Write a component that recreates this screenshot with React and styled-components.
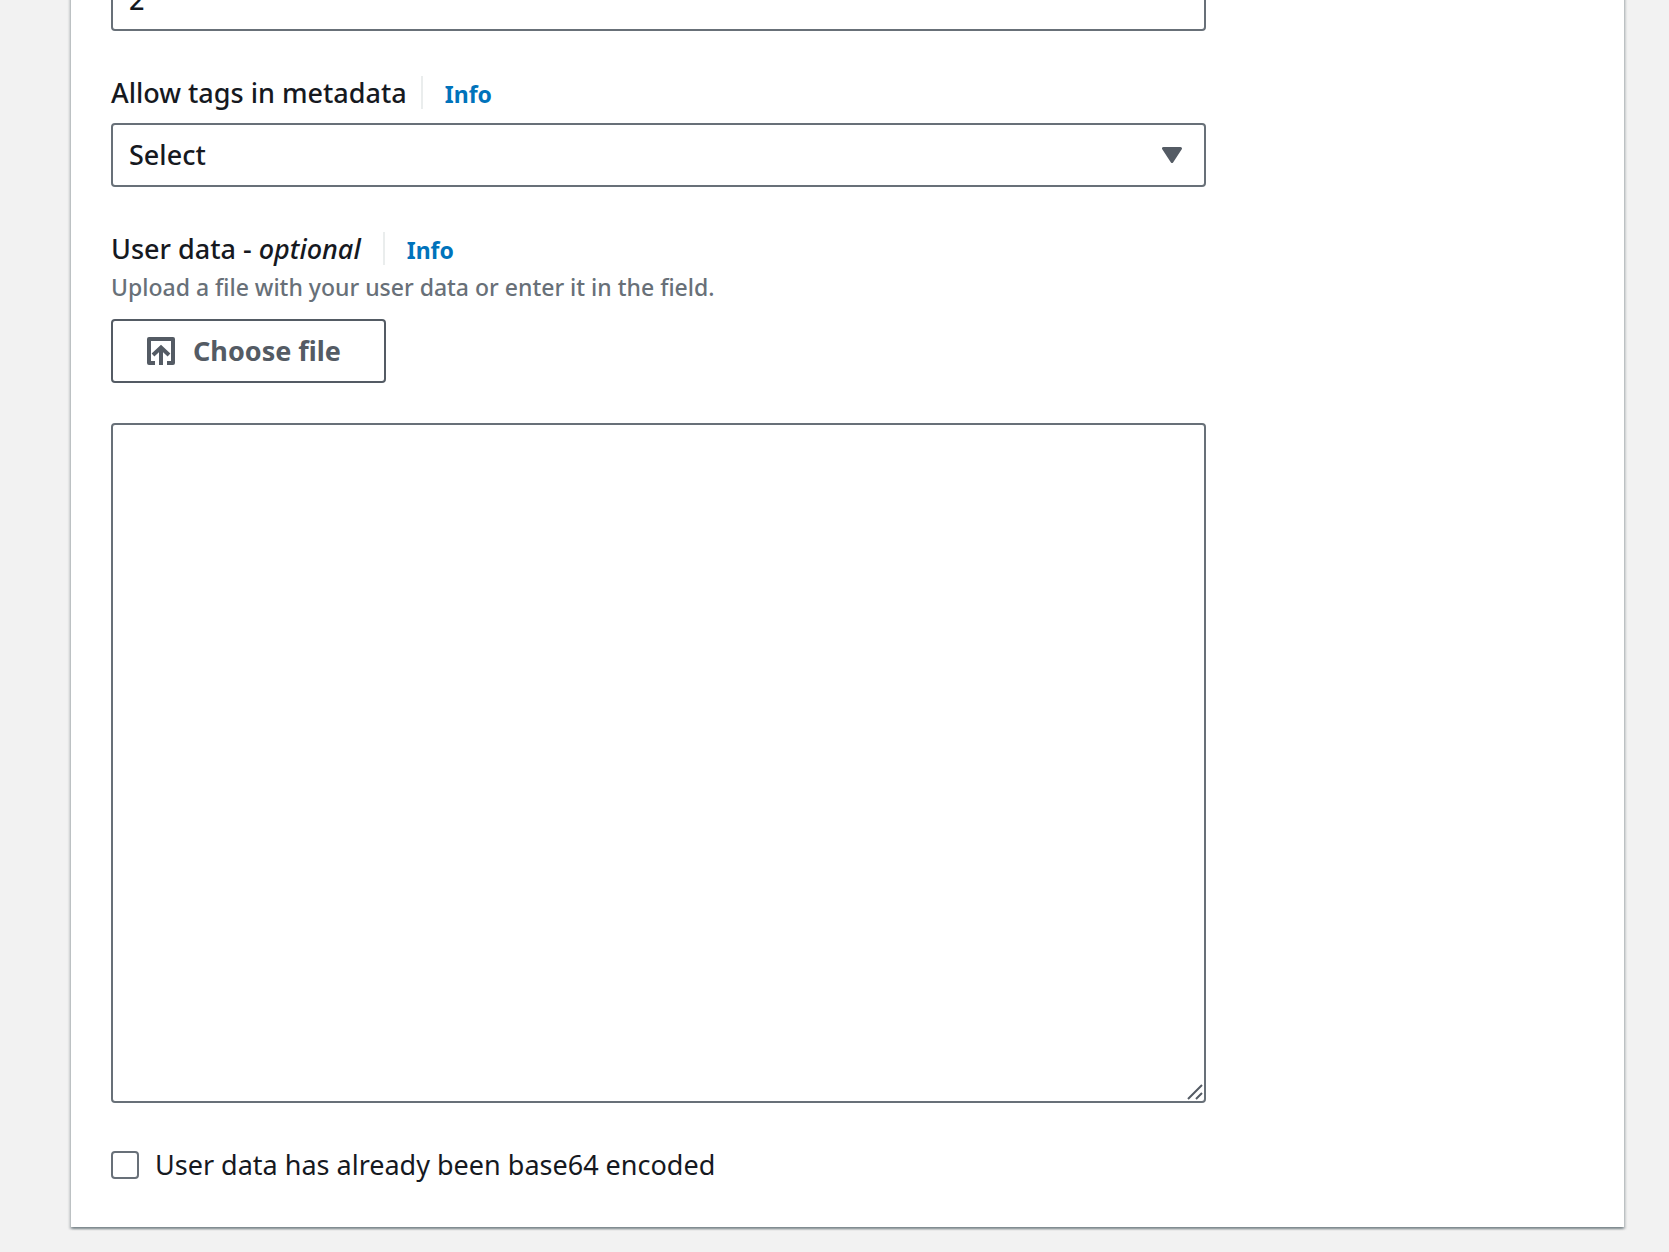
import React from "react";
import styled, { createGlobalStyle } from "styled-components";

const GlobalStyle = createGlobalStyle`
  *, *::before, *::after { box-sizing: border-box; }
  body {
    margin: 0;
    background: #f2f2f2;
    color: #16191f;
    font-family: "Noto Sans", "Open Sans", sans-serif;
    font-size: 27px;
    font-weight: 500;
    line-height: 36px;
  }
`;

const Page = styled.main`
  overflow: hidden;
  padding: 0 45px 25px 71px;
`;

const Panel = styled.section`
  margin-top: -73px;
  padding: 40px 40px 45px;
  background: #fff;
  box-shadow:
    0 2px 2px 0 rgba(0, 28, 36, 0.3),
    2px 2px 2px 0 rgba(0, 28, 36, 0.15),
    -2px 2px 2px 0 rgba(0, 28, 36, 0.15);
`;

const Grid = styled.form`
  display: grid;
  grid-template-columns: repeat(12, minmax(0, 1fr));
  column-gap: 40px;
`;

const Fields = styled.div`
  grid-column: span 9;
  display: flex;
  flex-direction: column;
  gap: 45px;
`;

const Field = styled.div`
  display: flex;
  flex-direction: column;
  align-items: flex-start;
`;

const FieldHeader = styled.div`
  display: flex;
  align-items: center;
  height: 33px;
  margin-bottom: ${(p) => (p.$tight ? 4 : 14)}px;
`;

const Label = styled.label`
  padding-right: ${(p) => (p.$wide ? 22 : 14)}px;
`;

const InfoLink = styled.a`
  height: 33px;
  padding-left: 22px;
  border-left: 2px solid #eaeded;
  color: #0073bb;
  font-size: 23px;
  font-weight: 700;
  line-height: 36px;
  text-decoration: none;
`;

const Description = styled.p`
  margin: 0 0 14px;
  color: #687078;
  font-size: 23px;
`;

const Control = styled.div`
  position: relative;
  width: 100%;
`;

const control = `
  display: block;
  width: 100%;
  border: 2px solid #687078;
  border-radius: 4px;
  background: #fff;
  color: inherit;
  font: inherit;
`;

const TextInput = styled.input`
  ${control}
  height: 64px;
  padding: 0 16px;
`;

const Select = styled.select`
  ${control}
  height: 64px;
  padding: 0 64px 0 16px;
  appearance: none;
`;

const Caret = styled.svg`
  position: absolute;
  top: 24px;
  right: 24px;
  pointer-events: none;
`;

const FileButton = styled.button`
  display: flex;
  align-items: center;
  gap: 18px;
  height: 64px;
  margin-bottom: 40px;
  padding: 0 43px 0 34px;
  border: 2px solid #545b64;
  border-radius: 4px;
  background: #fff;
  color: #545b64;
  font: inherit;
  font-weight: 700;
`;

const TextArea = styled.textarea`
  ${control}
  height: 680px;
  padding: 12px 16px;
  resize: none;
`;

const Grip = styled.svg`
  position: absolute;
  right: 3px;
  bottom: 3px;
  pointer-events: none;
`;

const CheckRow = styled.label`
  display: flex;
  align-items: center;
  gap: 16px;
  font-weight: 400;
  line-height: 34px;
`;

const Checkbox = styled.input`
  width: 28px;
  height: 28px;
  margin: 0;
  border: 2px solid #687078;
  border-radius: 4px;
  background: #fff;
  appearance: none;

  &:checked {
    border-color: #0073bb;
    background: #0073bb;
  }
`;

function UploadIcon() {
  return (
    <svg width="28" height="28" viewBox="0 0 28 28" fill="none" stroke="currentColor" strokeWidth="4" aria-hidden="true">
      <path d="M8 26H2V2h24v24h-6" strokeLinejoin="round" />
      <path d="M14 28V10.500M6 18l8-7.500 8 7.500" />
    </svg>
  );
}

export default function App() {
  return (
    <>
      <GlobalStyle />
      <Page>
        <Panel>
          <Grid>
            <Fields>
              <TextInput type="text" defaultValue="2" aria-label="Metadata response hop limit" />

              <Field>
                <FieldHeader>
                  <Label htmlFor="tags">Allow tags in metadata</Label>
                  <InfoLink href="#tags-info">Info</InfoLink>
                </FieldHeader>
                <Control>
                  <Select id="tags">
                    <option>Select</option>
                  </Select>
                  <Caret width="20" height="16" viewBox="0 0 20 16" aria-hidden="true">
                    <path
                      d="M1.500 1.500h17L10 14.500z"
                      fill="#545b64"
                      stroke="#545b64"
                      strokeWidth="3"
                      strokeLinejoin="round"
                    />
                  </Caret>
                </Control>
              </Field>

              <Field>
                <FieldHeader $tight>
                  <Label htmlFor="user-data" $wide>
                    User data - <em>optional</em>
                  </Label>
                  <InfoLink href="#user-data-info">Info</InfoLink>
                </FieldHeader>
                <Description>Upload a file with your user data or enter it in the field.</Description>
                <FileButton type="button">
                  <UploadIcon />
                  Choose file
                </FileButton>
                <Control>
                  <TextArea id="user-data" />
                  <Grip width="16" height="16" viewBox="0 0 16 16" fill="none" stroke="#545b64" strokeWidth="2" aria-hidden="true">
                    <path d="M1 15L15 1M9 15l6-6" />
                  </Grip>
                </Control>
              </Field>

              <CheckRow>
                <Checkbox type="checkbox" />
                User data has already been base64 encoded
              </CheckRow>
            </Fields>
          </Grid>
        </Panel>
      </Page>
    </>
  );
}
